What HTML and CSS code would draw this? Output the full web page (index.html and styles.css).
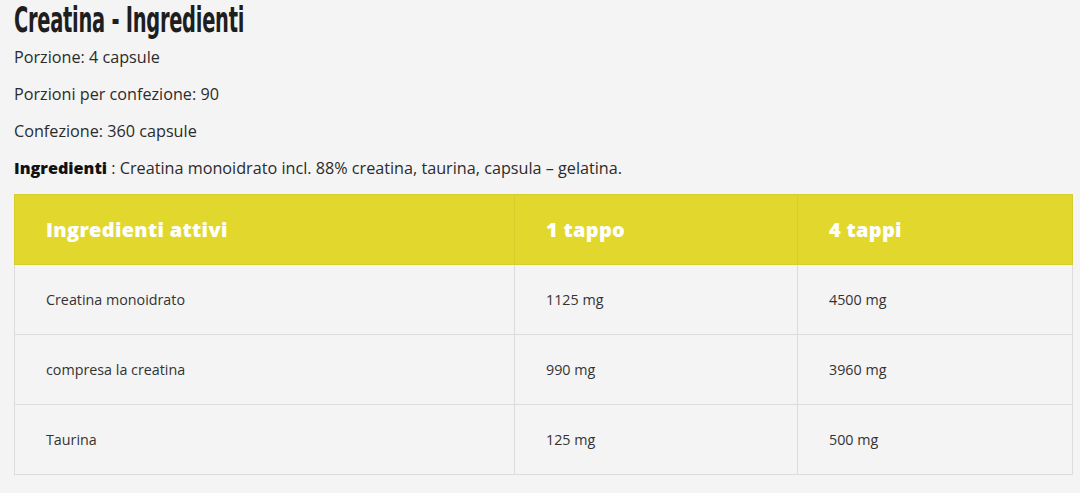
FILE: index.html
```html
<!DOCTYPE html>
<html lang="it">
<head>
<meta charset="utf-8">
<link rel="stylesheet" href="styles.css">
</head>
<body>
<div class="page">
  <h2 class="title"><span class="title-text">Creatina - Ingredienti</span></h2>
  <p class="info">Porzione: 4 capsule</p>
  <p class="info">Porzioni per confezione: 90</p>
  <p class="info">Confezione: 360 capsule</p>
  <p class="info"><strong class="lbl">Ingredienti</strong> : Creatina monoidrato incl. 88% creatina, taurina, capsula – gelatina.</p>
  <table class="tbl">
    <thead>
      <tr><th class="c1">Ingredienti attivi</th><th class="c2">1 tappo</th><th class="c3">4 tappi</th></tr>
    </thead>
    <tbody>
      <tr><td>Creatina monoidrato</td><td>1125 mg</td><td>4500 mg</td></tr>
      <tr><td>compresa la creatina</td><td>990 mg</td><td>3960 mg</td></tr>
      <tr><td>Taurina</td><td>125 mg</td><td>500 mg</td></tr>
    </tbody>
  </table>
</div>
</body>
</html>
```
FILE: styles.css
```css
html, body {
  margin: 0;
  padding: 0;
  background: #f4f4f4;
}
.page {
  padding: 2px 7px 0 14px;
  font-family: "Open Sans", "DejaVu Sans", sans-serif;
  color: #2a2a2a;
}
.title {
  margin: 0 0 8px 0;
  height: 36px;
  font-family: "DejaVu Sans", sans-serif;
  font-weight: 700;
  font-size: 36px;
  line-height: 36px;
  color: #1e1e1e;
  white-space: nowrap;
}
.title-text {
  display: inline-block;
  transform: scaleX(0.54);
  transform-origin: left center;
  letter-spacing: -0.5px;
}
.info {
  margin: 0 0 15px 0;
  font-size: 16.2px;
  line-height: 22px;
  color: #2b2b2b;
}
.lbl {
  font-weight: 800;
  color: #111;
}
.tbl {
  margin-top: 3px;
  width: 1059px;
  border-collapse: collapse;
  table-layout: fixed;
}
.tbl th, .tbl td {
  text-align: left;
  padding: 0 31px;
  height: 70px;
  border: 1px solid #dcdcdc;
  box-sizing: border-box;
}
.tbl th {
  background: #e2d82d;
  color: #fff;
  font-size: 20px;
  font-weight: 800;
  border-color: #d6cc2a;
  letter-spacing: 0.3px;
}
.tbl td {
  font-size: 14.3px;
  color: #333;
}
.c1 { width: 500px; }
.c2 { width: 283px; }
```
